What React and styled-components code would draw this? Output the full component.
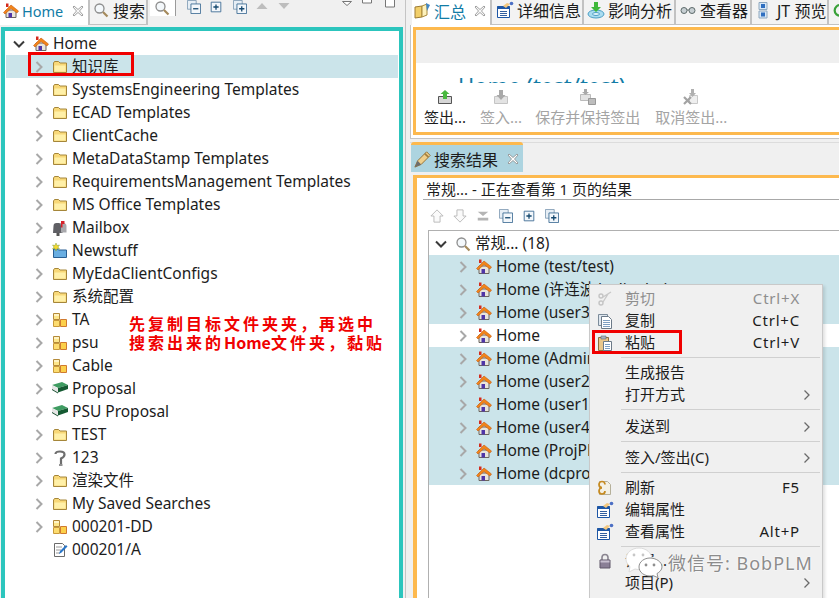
import React from "react";
import styled, { createGlobalStyle } from "styled-components";

const FONT = `"Noto Sans", "Noto Sans CJK SC", sans-serif`;

const GlobalStyle = createGlobalStyle`
  html, body {
    margin: 0;
    padding: 0;
    height: 100%;
    overflow: hidden;
    background: #f0f0f0;
  }
  body {
    font-family: ${FONT};
    font-size: 15px;
    color: #1c1c1c;
  }
`;

/* ---------- icons ---------- */

const FolderIcon = () => (
  <svg width="16" height="16" viewBox="0 0 16 16">
    <path d="M1.500 13.500V4l1-1.500h4L8 4h6.500v9.500z" fill="#f8d878" stroke="#a5863a" />
    <path d="M2.500 6.500h11v6h-11z" fill="#fff0a8" />
  </svg>
);

const HomeIcon = () => (
  <svg width="16" height="16" viewBox="0 0 16 16">
    <path d="M3 7h10v7.500H3z" fill="#e8e4dc" stroke="#6b655e" />
    <path d="M5.500 10h3.500v4.500H5.500z" fill="#4f35a8" />
    <path d="M.500 9.500L8 2l7.500 6-1.500 2-6-4.500-6 5.500z" fill="#f28418" stroke="#c65a10" strokeWidth=".6" />
    <path d="M3 .500h2.500v3.500H3z" fill="#d42a1c" />
  </svg>
);

const MailboxIcon = () => (
  <svg width="16" height="16" viewBox="0 0 16 16">
    <path d="M1.500 6q0-3 3-3h6v10h-9.500z" fill="#5f5f64" />
    <path d="M7 3h4q3.500 0 3.500 3v6.500H9V6q0-2-2-3z" fill="#a9a9ad" />
    <path d="M4.500 13h3v3h-3z" fill="#555" />
    <path d="M9 1h3.500v3H10.500v3.500H9z" fill="#d6222a" />
  </svg>
);

const NewstuffIcon = () => (
  <svg width="16" height="16" viewBox="0 0 16 16">
    <path d="M1.500 14.500V6h4l1 1h8v7.500z" fill="#69aee2" stroke="#2a5f93" />
    <path d="M4 0l1 2.500L7.500 2 6 4l1.500 2-2.500-.5L4 8l-1-2.500L.5 6 2 4 .5 2 3 2.500z" fill="#f6d92e" stroke="#6a8d2c" strokeWidth=".4" />
  </svg>
);

const CubesIcon = () => (
  <svg width="16" height="16" viewBox="0 0 16 16">
    <path d="M1.500 1.500h6v6h-6z" fill="#fde68a" stroke="#b48a3a" />
    <path d="M1.500 8.500h6v6h-6z" fill="#fcdc70" stroke="#c99a3a" />
    <path d="M8.500 7.500h6v7h-6z" fill="#fcd04a" stroke="#d07a30" />
    <path d="M2 2h5v2H2z" fill="#fff4c4" />
  </svg>
);

const BookIcon = () => (
  <svg width="16" height="16" viewBox="0 0 16 16">
    <path d="M0 4l10-3 6 3-10 3z" fill="#3f9c62" />
    <path d="M0 4l6 3v4L0 8z" fill="#e6e6e6" />
    <path d="M6 7l10-3v4L6 11.500z" fill="#155a32" />
    <path d="M0 8l6 3.500v1L0 9z" fill="#13492a" />
  </svg>
);

const UnknownIcon = () => (
  <svg width="16" height="16" viewBox="0 0 16 16">
    <path d="M3.500 4q0-2.500 4.500-2.500t4.500 3Q12.500 7 9 8.500V14" fill="none" stroke="#6e6e6e" strokeWidth="2.200" />
    <path d="M7 15h3.500" stroke="#6e6e6e" strokeWidth="1.500" />
  </svg>
);

const DocIcon = () => (
  <svg width="16" height="16" viewBox="0 0 16 16">
    <path d="M2.500 1.500h8l2 2v11h-10z" fill="#fff" stroke="#6b6b6b" />
    <path d="M4 5h6M4 8h5M4 11h4" stroke="#9a9a9a" />
    <path d="M7 12l1-3 6-6 1.500 1.500-6 6z" fill="#2a76c8" />
  </svg>
);

const MagnifierIcon = () => (
  <svg width="16" height="16" viewBox="0 0 16 16">
    <circle cx="6.500" cy="6.500" r="4.500" fill="#f4f8fb" stroke="#8d8d8d" strokeWidth="1.300" />
    <path d="M10 10l4.500 4.500" stroke="#a58a5c" strokeWidth="2.200" />
  </svg>
);

const CollapseStack = () => (
  <svg width="14" height="14" viewBox="0 0 16 16">
    <path d="M.500 .500h10v10h-10z" fill="#e6eef5" stroke="#7f9ab3" />
    <path d="M4.500 4.500h11v11h-11z" fill="#f3f7fb" stroke="#3b6a92" />
    <path d="M7 10h6" stroke="#16496f" strokeWidth="1.500" />
  </svg>
);

const ExpandBox = () => (
  <svg width="14" height="14" viewBox="0 0 16 16">
    <path d="M2.500 2.500h11v11h-11z" fill="#f3f7fb" stroke="#3b6a92" />
    <path d="M5 8h6M8 5v6" stroke="#16496f" strokeWidth="1.500" />
  </svg>
);

const ExpandStack = () => (
  <svg width="14" height="14" viewBox="0 0 16 16">
    <path d="M.500 .500h10v10h-10z" fill="#e6eef5" stroke="#7f9ab3" />
    <path d="M4.500 4.500h11v11h-11z" fill="#f3f7fb" stroke="#3b6a92" />
    <path d="M7 10h6M10 7v6" stroke="#16496f" strokeWidth="1.500" />
  </svg>
);

const Triangle = ({ down }) => (
  <svg width="16" height="16" viewBox="0 0 16 16">
    <path d={down ? "M2.500 3h11L8 9z" : "M2.500 9h11L8 3z"} fill="#bdbdbd" />
  </svg>
);

const MenuDown = () => (
  <svg width="16" height="16" viewBox="0 0 16 16">
    <path d="M2.500 2.500h9l-4.500 4z" fill="#fff" stroke="#777" />
  </svg>
);

const Minimize = () => (
  <svg width="16" height="16" viewBox="0 0 16 16">
    <path d="M1.500 -1h9v4h-9z" fill="#fff" stroke="#777" />
  </svg>
);

const Maximize = () => (
  <svg width="16" height="16" viewBox="0 0 16 16">
    <path d="M1.500 -2h9v9h-9z" fill="#fff" stroke="#777" />
  </svg>
);

const CloseGlyph = ({ light }) => (
  <svg width="12" height="12" viewBox="0 0 12 12">
    <path
      d="M2 1l4 3.500L10 1l1 1-3.500 4L11 10l-1 1-4-3.500L2 11l-1-1 3.500-4L1 2z"
      fill={light ? "#fff" : "#f8f8f8"}
      stroke="#8a8a8a"
      strokeWidth=".8"
    />
  </svg>
);

const SummaryIcon = () => (
  <svg width="18" height="18" viewBox="0 0 18 18">
    <path d="M1 5l7-1v11l-7 1z" fill="#f2cf6a" stroke="#9c7b35" />
    <path d="M8 4l5-2v11l-5 2z" fill="#fdf1bb" stroke="#a98a3d" />
    <path d="M12 1l4 2-3 6z" fill="#3f86c6" />
  </svg>
);

const DetailsIcon = () => (
  <svg width="18" height="18" viewBox="0 0 18 18">
    <path d="M1.500 5.500h12v11h-12z" fill="#fff" stroke="#1d56a5" />
    <path d="M1.500 5h12v3h-12z" fill="#1d56a5" />
    <path d="M4 10.500h7M4 12.500h7M4 14.500h7" stroke="#335f9e" />
    <path d="M7 5l4-3 3 1-4 4z" fill="#f3c77e" />
    <circle cx="15.500" cy="2.500" r="1.800" fill="#4c6fc4" />
  </svg>
);

const ImpactIcon = () => (
  <svg width="18" height="18" viewBox="0 0 18 18">
    <ellipse cx="9" cy="13" rx="8" ry="4" fill="#a9dcf0" stroke="#4b9ec4" />
    <ellipse cx="9" cy="13" rx="3.500" ry="1.500" fill="#e8f7fd" stroke="#4b9ec4" />
    <path d="M7 1h4v5h3l-5 5-5-5h3z" fill="#3fb83a" />
  </svg>
);

const GlassesIcon = () => (
  <svg width="18" height="18" viewBox="0 0 18 18">
    <circle cx="5" cy="9.500" r="3" fill="#c7cfd3" stroke="#5e6b6b" />
    <circle cx="13" cy="9.500" r="3" fill="#c7cfd3" stroke="#5e6b6b" />
    <path d="M8 9h2" stroke="#5e6b6b" />
  </svg>
);

const JtIcon = () => (
  <svg width="18" height="18" viewBox="0 0 18 18">
    <path d="M4 1.500h8v7H4z" fill="#d9e8f7" stroke="#8fa8bf" />
    <path d="M4 10h8v7H4z" fill="#d9e8f7" stroke="#8fa8bf" />
    <path d="M6 3h4v4H6zM6 11.500h4v4H6z" fill="#2f6fc0" />
  </svg>
);

const RefreshTabIcon = () => (
  <svg width="18" height="18" viewBox="0 0 18 18">
    <path d="M15 6a6 6 0 1 0 0 7" fill="none" stroke="#3aa23a" strokeWidth="2.500" />
  </svg>
);

const PencilIcon = () => (
  <svg width="18" height="18" viewBox="0 0 20 20">
    <path d="M1 19l3-7L14 2l4 4L8 16z" fill="#efcf8c" stroke="#8f6a2f" />
    <path d="M1 19l3-7 4 4z" fill="#6d6d6d" />
    <path d="M12 4l4 4" stroke="#a5813f" strokeWidth="2" />
  </svg>
);

const CheckOutIcon = () => (
  <svg width="16" height="16" viewBox="0 0 16 16">
    <path d="M1.500 7.500h13v7h-13z" fill="#d6d6d6" stroke="#555" />
    <path d="M6 10V5H3.500L8 1l4.500 4H10v5z" fill="#49b83f" />
  </svg>
);

const CheckInIcon = () => (
  <svg width="16" height="16" viewBox="0 0 16 16">
    <path d="M1.500 7.500h13v7h-13z" fill="#e3e3e3" stroke="#c4c4c4" />
    <path d="M6 1v5H3.500L8 11l4.500-5H10V1z" fill="#a9a9a9" />
  </svg>
);

const SaveKeepIcon = () => (
  <svg width="16" height="16" viewBox="0 0 16 16">
    <path d="M.500 5.500h10v6h-10z" fill="#e3e3e3" stroke="#bbb" />
    <path d="M4 0h3v3h2L5.500 6 2 3h2z" fill="#a9a9a9" />
    <path d="M8.500 9.500h7v6h-7z" fill="#bdbdbd" stroke="#999" />
  </svg>
);

const CancelOutIcon = () => (
  <svg width="16" height="16" viewBox="0 0 16 16">
    <path d="M6.500 6.500h8v8h-8z" fill="#efefef" stroke="#c9c9c9" />
    <path d="M8 0h3v4h2L9.500 8 6 4h2z" fill="#b0b0b0" />
    <path d="M1 8l7 7M8 8l-7 7" stroke="#a3a3a3" strokeWidth="2.200" />
  </svg>
);

const ScissorsIcon = () => (
  <svg width="16" height="16" viewBox="0 0 16 16">
    <circle cx="4" cy="5" r="2" fill="none" stroke="#c4c4c4" strokeWidth="1.400" />
    <circle cx="4" cy="12" r="2" fill="none" stroke="#c4c4c4" strokeWidth="1.400" />
    <path d="M6 6l8-5M6 11l5-8" stroke="#c8c8c8" strokeWidth="1.400" />
  </svg>
);

const CopyIcon = () => (
  <svg width="16" height="16" viewBox="0 0 16 16">
    <path d="M1.500 1.500h9v11h-9z" fill="#dfe7ef" stroke="#7c8b99" />
    <path d="M4.500 3.500h7l3 3v9h-10z" fill="#fff" stroke="#6c7a88" />
    <path d="M6 7.500h7M6 9.500h7M6 11.500h7M6 13.500h7" stroke="#7fa0c2" />
  </svg>
);

const PasteIcon = () => (
  <svg width="16" height="16" viewBox="0 0 16 16">
    <path d="M1.500 2.500h10v13h-10z" fill="#e8c68a" stroke="#8a6f3d" />
    <path d="M4 1h5v3H4z" fill="#a8b4bf" stroke="#5f6b75" strokeWidth=".6" />
    <path d="M6.500 6.500h8v9h-8z" fill="#fff" stroke="#6c7a88" />
    <path d="M8 9.500h5M8 11.500h5M8 13.500h5" stroke="#7fa0c2" />
  </svg>
);

const RefreshIcon = () => (
  <svg width="16" height="16" viewBox="0 0 16 16">
    <path d="M2.500 1.500h8l3 3v10h-11z" fill="#f3f0e4" stroke="#b5b09a" />
    <path d="M8 4.500a3 3 0 1 0-3 3M5 8a3 3 0 1 0 3 3" fill="none" stroke="#c68a20" strokeWidth="1.700" />
  </svg>
);

const PropsIcon = () => (
  <svg width="18" height="18" viewBox="0 0 18 18">
    <path d="M1.500 5.500h12v11h-12z" fill="#fff" stroke="#1d56a5" />
    <path d="M1.500 5h12v3h-12z" fill="#1d56a5" />
    <path d="M4 10.500h7M4 12.500h7M4 14.500h7" stroke="#335f9e" />
    <path d="M7 5l4-3 3 1-4 4z" fill="#f3c77e" />
    <circle cx="15.500" cy="2.500" r="1.800" fill="#4c6fc4" />
  </svg>
);

const LockIcon = () => (
  <svg width="16" height="16" viewBox="0 0 16 16">
    <path d="M5 7V4.500a3 3 0 0 1 6 0V7" fill="none" stroke="#8a8590" strokeWidth="1.600" />
    <path d="M3 7h10v8H3z" fill="#8a7f96" stroke="#5e5668" />
    <path d="M3.500 7.500h9v2h-9z" fill="#c8c0d0" />
  </svg>
);

const WeChatIcon = () => (
  <svg width="38" height="32" viewBox="0 0 38 32">
    <path d="M14 2C7 2 1 6.500 1 13c0 3 1.500 5.500 4 7.500L4 26l6-3c1.300.4 2.600.5 4 .5 7 0 13-4.500 13-10.500S21 2 14 2z" fill="#fff" stroke="#dcdcdc" />
    <path d="M25 12c-5.500 0-11 3.500-11 9s5.500 9 11 9c1 0 2-.1 3-.4l5 2-1-4c2.400-1.500 5-3.600 5-6.600 0-5.500-6.500-9-12-9z" fill="#fff" stroke="#8f8f8f" />
    <circle cx="21" cy="19" r="1.400" fill="#8f8f8f" />
    <circle cx="29" cy="19" r="1.400" fill="#8f8f8f" />
    <circle cx="9" cy="9" r="1.400" fill="#c7c7c7" />
    <circle cx="18" cy="9" r="1.400" fill="#c7c7c7" />
  </svg>
);

const Chevron = ({ open }) => (
  <svg width="16" height="16" viewBox="0 0 16 16">
    {open ? (
      <path d="M3 5.500l5 5 5-5" fill="none" stroke="#3a3a3a" strokeWidth="2" />
    ) : (
      <path d="M5.500 3l5 5-5 5" fill="none" stroke="#a8a8a8" strokeWidth="2" />
    )}
  </svg>
);

/* ---------- layout ---------- */

const Page = styled.div`
  position: relative;
  display: flex;
  width: 839px;
  height: 598px;
  overflow: hidden;
  background: #f0f0f0;
`;

const LeftColumn = styled.div`
  display: flex;
  flex-direction: column;
  width: 406px;
  flex: none;
  border-right: 1px solid #c4c4c4;
  box-sizing: border-box;
`;

const RightColumn = styled.div`
  display: flex;
  flex-direction: column;
  flex: 1;
  min-width: 0;
  padding-left: 4px;
`;

const TabBar = styled.div`
  display: flex;
  height: 25px;
  flex: none;
  padding-left: ${(p) => p.$inset ?? 0}px;
  background: #f0f0f0;
`;

const Tab = styled.div`
  display: flex;
  align-items: center;
  gap: ${(p) => p.$gap ?? 5}px;
  box-sizing: border-box;
  width: ${(p) => p.$width}px;
  padding: 0 0 4px ${(p) => p.$pad ?? 4}px;
  flex: none;
  height: 25px;
  font-size: ${(p) => p.$size ?? 16}px;
  white-space: nowrap;
  overflow: hidden;
  background: ${(p) => (p.$active ? "#fff" : "#f3f3f3")};
  color: ${(p) => (p.$active ? "#127ca6" : "#1c1c1c")};
  border-right: 2px solid #c2c2c2;
  border-bottom: ${(p) => (p.$active ? "none" : "1px solid #c2c2c2")};
`;

const TabClose = styled.span`
  display: flex;
  margin-left: ${(p) => p.$left ?? 0}px;
`;

const ViewTools = styled.div`
  display: flex;
  align-items: flex-start;
  flex: 1;
  height: 24px;
`;

const FindBox = styled.div`
  display: flex;
  justify-content: center;
  width: 24px;
  height: 16px;
  margin-left: 2px;
  background: #fff;
  overflow: hidden;
  border-right: 1px solid #9a9a9a;
  padding-right: 1px;
`;

const ToolIcon = styled.span`
  display: flex;
  margin-left: ${(p) => p.$left}px;
  margin-top: ${(p) => p.$top ?? 0}px;
`;

const TreePanel = styled.div`
  flex: 1;
  margin: 2px 2px 0 1px;
  padding: 1px 1px 0;
  border: 4px solid #2cc5bd;
  border-bottom: none;
  background: #fff;
  overflow: hidden;
`;

const Row = styled.div`
  display: flex;
  align-items: center;
  height: 23px;
  font-size: 15.500px;
  padding-left: ${(p) => p.$indent}px;
  white-space: nowrap;
  background: ${(p) => (p.$selected ? "#cbe4ea" : "transparent")};
`;

const RowText = styled.span`
  margin-top: -2px;
`;

const Twist = styled.span`
  display: flex;
  width: 16px;
  flex: none;
`;

const NodeIcon = styled.span`
  display: flex;
  width: 16px;
  flex: none;
  margin: 0 4px 0 ${(p) => p.$gap ?? 5}px;
`;

const SummaryFrame = styled.div`
  flex: none;
  padding: 2px 0 3px 2px;
  border-left: 1px solid #c4c4c4;
  border-bottom: 1px solid #c4c4c4;
  background: #fff;
`;

const SummaryPanel = styled.div`
  height: 108px;
  box-sizing: border-box;
  border: 3px solid #fdb94e;
  border-right: none;
  background: #fff;
  overflow: hidden;
`;

const SummaryHead = styled.div`
  height: 33px;
  background: #efefef;
`;

const SummaryTitle = styled.div`
  height: 20px;
  overflow: hidden;
  padding: 7px 0 0 42px;
  box-sizing: border-box;
  font-size: 22px;
  line-height: 30px;
  color: #127ca6;
`;

const ActionBar = styled.div`
  display: flex;
  padding-left: 8px;
`;

const Action = styled.div`
  display: flex;
  flex-direction: column;
  align-items: center;
  gap: 2px;
  margin-right: ${(p) => p.$right ?? 0}px;
  padding-top: 6px;
  color: ${(p) => (p.$disabled ? "#a4a4a4" : "#1c1c1c")};
  line-height: 20px;
  white-space: nowrap;
`;

const ResultsTabs = styled.div`
  display: flex;
  height: 33px;
  flex: none;
  margin-top: 3px;
  background: #f0f0f0;
  box-shadow: inset 0 1px 0 #dcdcdc;
`;

const ResultsTab = styled.div`
  display: flex;
  align-items: center;
  gap: 2px;
  width: 112px;
  margin-left: 1px;
  padding-left: 3px;
  height: 30px;
  box-sizing: border-box;
  background: #add4e0;
  border-top: 3px solid #fdb94e;
  border-radius: 3px 3px 0 0;
  font-size: 16px;
  white-space: nowrap;
`;

const ResultsPanel = styled.div`
  flex: 1;
  margin-left: 3px;
  border-top: 3px solid #fdb94e;
  border-left: 4px solid #fdb94e;
  background: #fff;
  overflow: hidden;
`;

const ResultsHead = styled.div`
  height: 22px;
  box-sizing: border-box;
  line-height: 22px;
  margin-left: 6px;
  padding-left: 3px;
  font-size: 15px;
  border-bottom: 1px solid #a8a8a8;
`;

const ResultsTools = styled.div`
  display: flex;
  gap: 9px;
  height: 30px;
  padding: 9px 0 0 13px;
  box-sizing: border-box;
`;

const ArrowTool = styled.svg`
  display: block;
`;

const ResultsTree = styled.div`
  margin-left: 11px;
  padding-top: 1px;
  height: 100%;
  border-top: 1px solid #b0b0b0;
  border-left: 1px solid #b0b0b0;
`;

const ContextMenu = styled.div`
  position: absolute;
  left: 589px;
  top: 284px;
  width: 234px;
  height: 330px;
  padding: 3px 0;
  box-sizing: border-box;
  background: #f0f0f0;
  border: 1px solid #c9c9c9;
  box-shadow: 2px 2px 3px rgba(0, 0, 0, 0.12);
`;

const MenuRow = styled.div`
  display: flex;
  align-items: center;
  height: 22px;
  padding-left: 5px;
  color: ${(p) => (p.$disabled ? "#8e8e8e" : "#1c1c1c")};
  white-space: nowrap;
`;

const MenuIcon = styled.span`
  display: flex;
  justify-content: center;
  width: 20px;
  flex: none;
  margin-right: 10px;
`;

const MenuLabel = styled.span`
  flex: 1;
  margin-top: -3px;
`;

const MenuKey = styled.span`
  margin-top: -3px;
  letter-spacing: 0.800px;
  text-align: right;
`;

const MenuArrow = styled.span`
  display: flex;
  width: 19px;
  padding-left: 3px;
  flex: none;
`;

const MenuSep = styled.div`
  height: 1px;
  margin: 3px 2px ${(p) => p.$after}px 31px;
  background: #d0d0d0;
`;

const RedBox = styled.div`
  position: absolute;
  left: ${(p) => p.$x}px;
  top: ${(p) => p.$y}px;
  width: ${(p) => p.$w}px;
  height: ${(p) => p.$h}px;
  box-sizing: border-box;
  border: 3px solid #f00000;
`;

const Note = styled.div`
  position: absolute;
  left: 129px;
  top: 314px;
  color: #f00000;
  font-size: 16px;
  font-weight: 700;
  line-height: 19px;
  letter-spacing: 3px;
  white-space: nowrap;
  font-family: "Noto Sans CJK SC", sans-serif;
`;

const NoteWord = styled.span`
  letter-spacing: 0;
`;

const Watermark = styled.div`
  position: absolute;
  left: 625px;
  top: 546px;
  display: flex;
  align-items: center;
  gap: 5px;
  font-size: 18px;
  letter-spacing: 1px;
  color: #8c8c8c;
  white-space: nowrap;
  text-shadow: 0 0 2px #fff, 0 0 2px #fff;
`;

/* ---------- data ---------- */

const folders = [
  ["知识库", FolderIcon, true],
  ["SystemsEngineering Templates", FolderIcon],
  ["ECAD Templates", FolderIcon],
  ["ClientCache", FolderIcon],
  ["MetaDataStamp Templates", FolderIcon],
  ["RequirementsManagement Templates", FolderIcon],
  ["MS Office Templates", FolderIcon],
  ["Mailbox", MailboxIcon],
  ["Newstuff", NewstuffIcon],
  ["MyEdaClientConfigs", FolderIcon],
  ["系统配置", FolderIcon],
  ["TA", CubesIcon],
  ["psu", CubesIcon],
  ["Cable", CubesIcon],
  ["Proposal", BookIcon],
  ["PSU Proposal", BookIcon],
  ["TEST", FolderIcon],
  ["123", UnknownIcon],
  ["渲染文件", FolderIcon],
  ["My Saved Searches", FolderIcon],
  ["000201-DD", CubesIcon],
];

const results = [
  ["Home (test/test)", true],
  ["Home (许连波/xulianbo)", true],
  ["Home (user3/user3)", true],
  ["Home", false],
  ["Home (Administrator)", true],
  ["Home (user2/user2)", true],
  ["Home (user1/user1)", true],
  ["Home (user4/user4)", true],
  ["Home (ProjPM/ProjPM)", true],
  ["Home (dcproxy/dcproxy)", true],
];

const menu = [
  { label: "剪切", Icon: ScissorsIcon, keys: "Ctrl+X", disabled: true },
  { label: "复制", Icon: CopyIcon, keys: "Ctrl+C" },
  { label: "粘贴", Icon: PasteIcon, keys: "Ctrl+V" },
  { sep: 4 },
  { label: "生成报告" },
  { label: "打开方式", more: true },
  { sep: 6 },
  { label: "发送到", more: true },
  { sep: 5 },
  { label: "签入/签出(C)", more: true },
  { sep: 4 },
  { label: "刷新", Icon: RefreshIcon, keys: "F5" },
  { label: "编辑属性", Icon: PropsIcon },
  { label: "查看属性", Icon: PropsIcon, keys: "Alt+P" },
  { sep: 3 },
  { label: "设置...", Icon: LockIcon },
  { label: "项目(P)", more: true },
];

const App = () => (
  <Page>
    <GlobalStyle />
    <LeftColumn>
      <TabBar>
        <Tab $active $width={90} $pad={3} $gap={3} $size={14.5}>
          <HomeIcon />
          Home
          <TabClose $left={6}>
            <CloseGlyph />
          </TabClose>
        </Tab>
        <Tab $width={58} $pad={3} $gap={4}>
          <MagnifierIcon />
          搜索
        </Tab>
        <ViewTools>
          <FindBox>
            <MagnifierIcon />
          </FindBox>
          <ToolIcon $left={11}>
            <CollapseStack />
          </ToolIcon>
          <ToolIcon $left={8}>
            <ExpandBox />
          </ToolIcon>
          <ToolIcon $left={10}>
            <ExpandStack />
          </ToolIcon>
          <ToolIcon $left={7}>
            <Triangle />
          </ToolIcon>
          <ToolIcon $left={6}>
            <Triangle down />
          </ToolIcon>
          <ToolIcon $left={48} $top={-1}>
            <MenuDown />
          </ToolIcon>
          <ToolIcon $left={5}>
            <Minimize />
          </ToolIcon>
          <ToolIcon $left={7}>
            <Maximize />
          </ToolIcon>
        </ViewTools>
      </TabBar>
      <TreePanel>
        <Row $indent={5}>
          <Twist>
            <Chevron open />
          </Twist>
          <NodeIcon $gap={6}>
            <HomeIcon />
          </NodeIcon>
          <RowText>Home</RowText>
        </Row>
        {folders.map(([label, Icon, selected]) => (
          <Row key={label} $indent={25} $selected={selected}>
            <Twist>
              <Chevron />
            </Twist>
            <NodeIcon>
              <Icon />
            </NodeIcon>
            <RowText>{label}</RowText>
          </Row>
        ))}
        <Row $indent={41}>
          <NodeIcon>
            <DocIcon />
          </NodeIcon>
          <RowText>000201/A</RowText>
        </Row>
      </TreePanel>
    </LeftColumn>

    <RightColumn>
      <TabBar $inset={2}>
        <Tab $active $width={80} $pad={2} $gap={2}>
          <SummaryIcon />
          汇总
          <TabClose $left={6}>
            <CloseGlyph />
          </TabClose>
        </Tab>
        <Tab $width={92} $gap={3}>
          <DetailsIcon />
          详细信息
        </Tab>
        <Tab $width={92} $gap={3} $pad={3}>
          <ImpactIcon />
          影响分析
        </Tab>
        <Tab $width={76} $gap={3} $pad={3}>
          <GlassesIcon />
          查看器
        </Tab>
        <Tab $width={77} $gap={4} $pad={3}>
          <JtIcon />
          JT 预览
        </Tab>
        <Tab $width={20} $pad={2}>
          <RefreshTabIcon />
        </Tab>
      </TabBar>
      <SummaryFrame>
        <SummaryPanel>
          <SummaryHead />
          <SummaryTitle>Home (test/test)</SummaryTitle>
          <ActionBar>
            <Action $right={14}>
              <CheckOutIcon />
              签出...
            </Action>
            <Action $right={13} $disabled>
              <CheckInIcon />
              签入...
            </Action>
            <Action $right={15} $disabled>
              <SaveKeepIcon />
              保存并保持签出
            </Action>
            <Action $disabled>
              <CancelOutIcon />
              取消签出...
            </Action>
          </ActionBar>
        </SummaryPanel>
      </SummaryFrame>
      <ResultsTabs>
        <ResultsTab>
          <PencilIcon />
          搜索结果
          <TabClose $left={7}>
            <CloseGlyph light />
          </TabClose>
        </ResultsTab>
      </ResultsTabs>
      <ResultsPanel>
        <ResultsHead>常规... - 正在查看第 1 页的结果</ResultsHead>
        <ResultsTools>
          <ArrowTool width="14" height="14" viewBox="0 0 16 16">
            <path d="M8 1l7 7h-3.500v7h-7V8H1z" fill="#fafafa" stroke="#b5b5b5" />
          </ArrowTool>
          <ArrowTool width="14" height="14" viewBox="0 0 16 16">
            <path d="M8 15l7-7h-3.500V1h-7v7H1z" fill="#fafafa" stroke="#b5b5b5" />
          </ArrowTool>
          <ArrowTool width="14" height="14" viewBox="0 0 16 16">
            <path d="M2 3h12L8 8zM2 10h12v3H2z" fill="#b4b4b4" />
          </ArrowTool>
          <CollapseStack />
          <ExpandBox />
          <ExpandStack />
        </ResultsTools>
        <ResultsTree>
          <Row $indent={4}>
            <Twist>
              <Chevron open />
            </Twist>
            <NodeIcon $gap={6}>
              <MagnifierIcon />
            </NodeIcon>
            <RowText>常规... (18)</RowText>
          </Row>
          {results.map(([label, selected]) => (
            <Row key={label} $indent={26} $selected={selected}>
              <Twist>
                <Chevron />
              </Twist>
              <NodeIcon>
                <HomeIcon />
              </NodeIcon>
              <RowText>{label}</RowText>
            </Row>
          ))}
        </ResultsTree>
      </ResultsPanel>
    </RightColumn>

    <ContextMenu>
      {menu.map((item, i) =>
        item.sep ? (
          <MenuSep key={i} $after={item.sep} />
        ) : (
          <MenuRow key={item.label} $disabled={item.disabled}>
            <MenuIcon>{item.Icon && <item.Icon />}</MenuIcon>
            <MenuLabel>{item.label}</MenuLabel>
            {item.keys && <MenuKey>{item.keys}</MenuKey>}
            <MenuArrow>
              {item.more && (
                <svg width="8" height="12" viewBox="0 0 8 12">
                  <path d="M1.500 1.500l4.500 4.500-4.500 4.500" fill="none" stroke="#6a6a6a" strokeWidth="1.300" />
                </svg>
              )}
            </MenuArrow>
          </MenuRow>
        )
      )}
    </ContextMenu>

    <RedBox $x={28} $y={52} $w={106} $h={24} />
    <RedBox $x={592} $y={330} $w={90} $h={24} />
    <Note>
      先复制目标文件夹夹，再选中
      <br />
      搜索出来的<NoteWord>Home</NoteWord>文件夹，黏贴
    </Note>
    <Watermark>
      <WeChatIcon />
      微信号: BobPLM
    </Watermark>
  </Page>
);

export default App;
